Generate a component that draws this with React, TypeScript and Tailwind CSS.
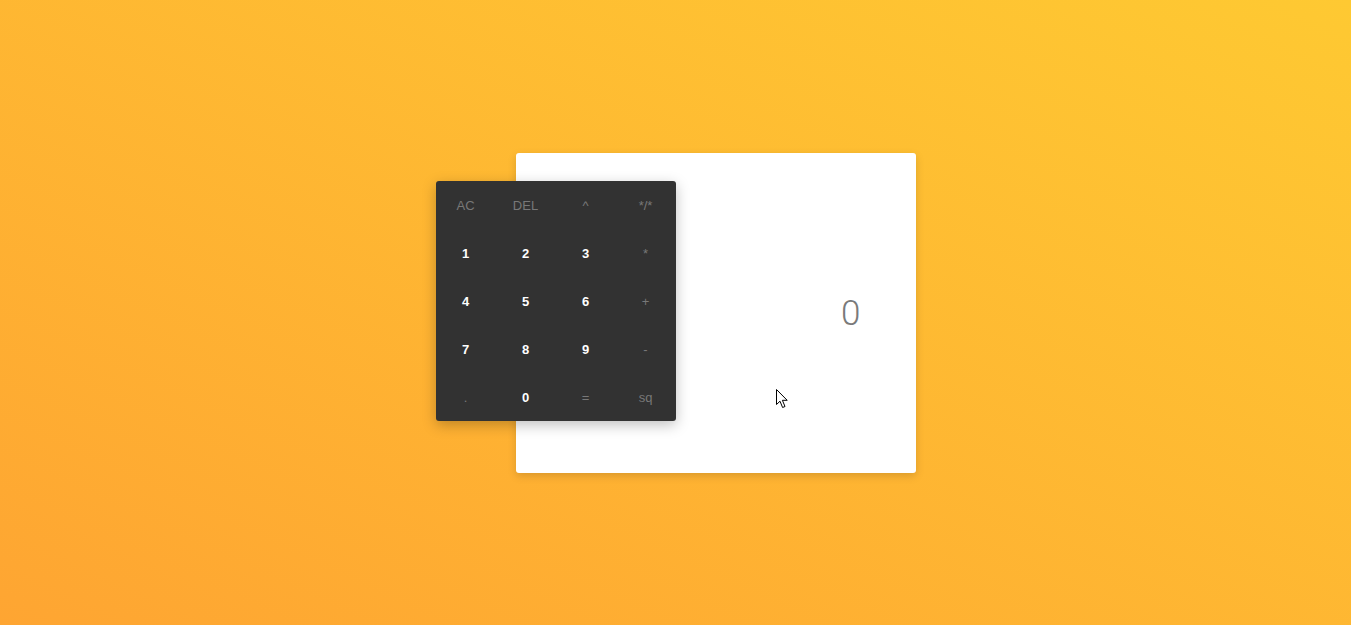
import React from "react";

const keys = [
  { label: "AC", kind: "op" },
  { label: "DEL", kind: "op" },
  { label: "^", kind: "op" },
  { label: "*/*", kind: "op" },
  { label: "1", kind: "num" },
  { label: "2", kind: "num" },
  { label: "3", kind: "num" },
  { label: "*", kind: "op" },
  { label: "4", kind: "num" },
  { label: "5", kind: "num" },
  { label: "6", kind: "num" },
  { label: "+", kind: "op" },
  { label: "7", kind: "num" },
  { label: "8", kind: "num" },
  { label: "9", kind: "num" },
  { label: "-", kind: "op" },
  { label: ".", kind: "op" },
  { label: "0", kind: "num" },
  { label: "=", kind: "op" },
  { label: "sq", kind: "op" },
];

const App: React.FC = () => {
  return (
    <div className="w-full h-[625px] flex items-center justify-center bg-gradient-to-tr from-[#fea532] to-[#fec932] font-['Liberation_Sans',Arial,sans-serif]">
      <div className="flex items-start">
        {/* keypad */}
        <div className="relative z-10 mt-[28px] -mr-[160px] w-[240px] h-[240px] bg-[#323232] rounded-[3px] shadow-[0_4px_14px_rgba(0,0,0,0.25)] grid grid-cols-4 grid-rows-5">
          {keys.map((k) => (
            <button
              key={k.label}
              className={
                k.kind === "num"
                  ? "flex items-center justify-center pt-[2px] text-[13px] font-bold text-white"
                  : "flex items-center justify-center pt-[2px] text-[13px] text-[#787878]"
              }
            >
              {k.label}
            </button>
          ))}
        </div>

        {/* display */}
        <div className="relative w-[400px] h-[320px] bg-white rounded-[3px] shadow-[0_3px_8px_rgba(0,0,0,0.15)] flex items-center justify-end pr-[55px] pt-[2px]">
          <span className="text-[35px] font-light text-[#7a7a7a] font-['Roboto',Arial,sans-serif] leading-none">
            0
          </span>
          <svg
            className="absolute left-[260px] top-[236px]"
            width="14"
            height="21"
            viewBox="0 0 14 21"
          >
            <path
              d="M0.5 0.5 L0.5 15.5 L4 12.2 L6.6 18.5 L9 17.5 L6.4 11.3 L11.2 11.3 Z"
              fill="#fff"
              stroke="#000"
              strokeWidth="1"
              strokeLinejoin="round"
            />
          </svg>
        </div>
      </div>
    </div>
  );
};

export default App;
